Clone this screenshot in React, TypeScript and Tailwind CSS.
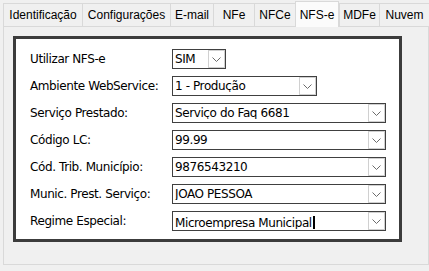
import React from "react";

const tabs = [
  { label: "Identificação", w: "w-[79px]" },
  { label: "Configurações", w: "w-[88px]" },
  { label: "E-mail", w: "w-[43px]" },
  { label: "NFe", w: "w-[41px]" },
  { label: "NFCe", w: "w-[41px]" },
  { label: "NFS-e", w: "w-[47px]", active: true },
  { label: "MDFe", w: "w-[40px]" },
  { label: "Nuvem", w: "w-[50px]" },
];

function Chevron() {
  return (
    <svg width="9" height="5" viewBox="0 0 9 5" fill="none">
      <path d="M0.5 0.5 L4.5 4.5 L8.5 0.5" stroke="#6b6b6b" strokeWidth="1" />
    </svg>
  );
}

function Combo({ value, width, caret }: { value: string; width: string; caret?: boolean }) {
  return (
    <div className={`flex h-[20px] ${width} items-center border border-[#404040] bg-white`}>
      <span className="flex-1 truncate pl-[2px] text-[12px] leading-none tracking-[-0.4px] text-black">
        {value}
        {caret && <span className="ml-px inline-block h-[14px] w-[2px] translate-y-[3px] bg-black" />}
      </span>
      <div className="flex h-[18px] w-[17px] items-center justify-center border border-[#d0d0d0] bg-white">
        <Chevron />
      </div>
    </div>
  );
}

const rows = [
  { label: "Utilizar NFS-e", value: "SIM", width: "w-[54px]" },
  { label: "Ambiente WebService:", value: "1 - Produção", width: "w-[145px]" },
  { label: "Serviço Prestado:", value: "Serviço do Faq 6681", width: "w-[214px]" },
  { label: "Código LC:", value: "99.99", width: "w-[214px]" },
  { label: "Cód. Trib. Município:", value: "9876543210", width: "w-[214px]" },
  { label: "Munic. Prest. Serviço:", value: "JOAO PESSOA", width: "w-[214px]" },
  { label: "Regime Especial:", value: "Microempresa Municipal", width: "w-[214px]", caret: true },
];

export default function App() {
  return (
    <div className="relative h-[271px] w-[429px] overflow-hidden bg-[#f0f0f0] font-['DejaVu_Sans',sans-serif]">
      {/* tab strip */}
      <div className="flex h-[26px] items-end pl-[3px]">
        {tabs.map((t) =>
          t.active ? (
            <div
              key={t.label}
              className={`relative z-10 -mb-px flex h-[26px] ${t.w} items-start justify-center border border-b-0 border-[#d9d9d9] bg-[#fbfbfb] pt-[4px] font-['Liberation_Sans',sans-serif] text-[12px] text-black`}
            >
              {t.label}
            </div>
          ) : (
            <div
              key={t.label}
              className={`flex h-[23px] ${t.w} shrink-0 items-center justify-center border border-b-0 border-r-0 border-[#d9d9d9] bg-[#f0f0f0] font-['Liberation_Sans',sans-serif] text-[12px] text-black`}
            >
              {t.label}
            </div>
          )
        )}
      </div>

      {/* tab page */}
      <div className="ml-[3px] h-[239px] border border-[#d9d9d9] bg-[#f0f0f0] pl-[9px] pt-[9px]">
        <div className="h-[206px] w-[389px] border-[3px] border-[#3c3c3c] bg-white pl-[14px] pt-[10px]">
          <div className="flex flex-col gap-[7px]">
            {rows.map((r) => (
              <div key={r.label} className="flex h-[20px] items-center">
                <div className="w-[142px] text-[12px] tracking-[-0.4px] text-black">{r.label}</div>
                <Combo value={r.value} width={r.width} caret={r.caret} />
              </div>
            ))}
          </div>
        </div>
      </div>
    </div>
  );
}
